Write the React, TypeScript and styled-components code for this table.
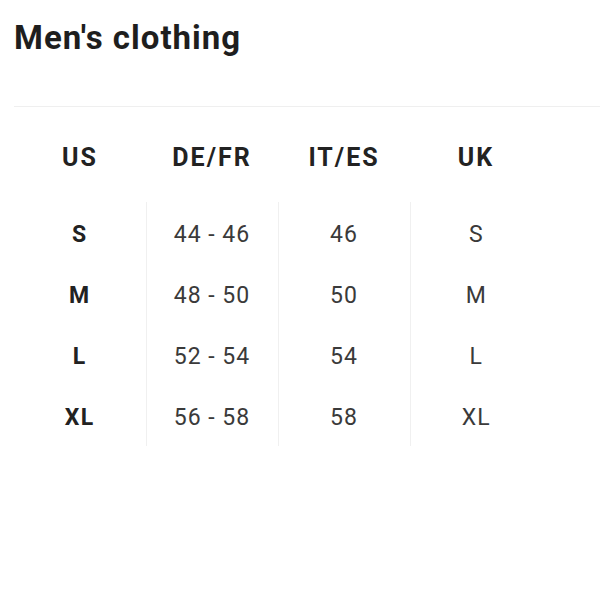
import React from "react";
import styled, { createGlobalStyle } from "styled-components";

const Global = createGlobalStyle`
  html, body { margin: 0; padding: 0; background: #fff; }
  body { font-family: Roboto, "Noto Sans", sans-serif; color: #222; }
`;

const Page = styled.div`
  padding: 17px 0 0 14px;
`;

const Title = styled.h1`
  margin: 0;
  font-size: 33px;
  font-weight: 700;
  line-height: 42px;
  color: #1e1e1e;
  letter-spacing: 1px;
`;

const Divider = styled.hr`
  margin: 47px 0 0 0;
  border: 0;
  border-top: 1px solid #efefef;
`;

const Table = styled.table`
  width: 528px;
  border-collapse: collapse;
  table-layout: fixed;
`;

const Head = styled.th`
  height: 89px;
  padding: 6px 0 0 0;
  font-size: 25px;
  font-weight: 700;
  letter-spacing: 2px;
  color: #222;
  text-align: center;
  vertical-align: middle;
`;

const Cell = styled.td<{ $bold?: boolean; $last?: boolean }>`
  height: 56px;
  padding: 4px 0 1px 0;
  text-align: center;
  font-size: 23px;
  letter-spacing: ${(p) => (p.$bold ? "1.5px" : "1px")};
  font-weight: ${(p) => (p.$bold ? 700 : 400)};
  color: ${(p) => (p.$bold ? "#222" : "#3a3a3a")};
  border-right: ${(p) => (p.$last ? "0" : "1px solid #f0f0f0")};
`;

const headers = ["US", "DE/FR", "IT/ES", "UK"];
const rows = [
  ["S", "44 - 46", "46", "S"],
  ["M", "48 - 50", "50", "M"],
  ["L", "52 - 54", "54", "L"],
  ["XL", "56 - 58", "58", "XL"],
];

export default function App() {
  return (
    <Page>
      <Global />
      <Title>Men's clothing</Title>
      <Divider />
      <Table>
        <thead>
          <tr>
            {headers.map((h) => (
              <Head key={h}>{h}</Head>
            ))}
          </tr>
        </thead>
        <tbody>
          {rows.map((r) => (
            <tr key={r[0]}>
              {r.map((c, i) => (
                <Cell key={i} $bold={i === 0} $last={i === r.length - 1}>
                  {c}
                </Cell>
              ))}
            </tr>
          ))}
        </tbody>
      </Table>
    </Page>
  );
}
